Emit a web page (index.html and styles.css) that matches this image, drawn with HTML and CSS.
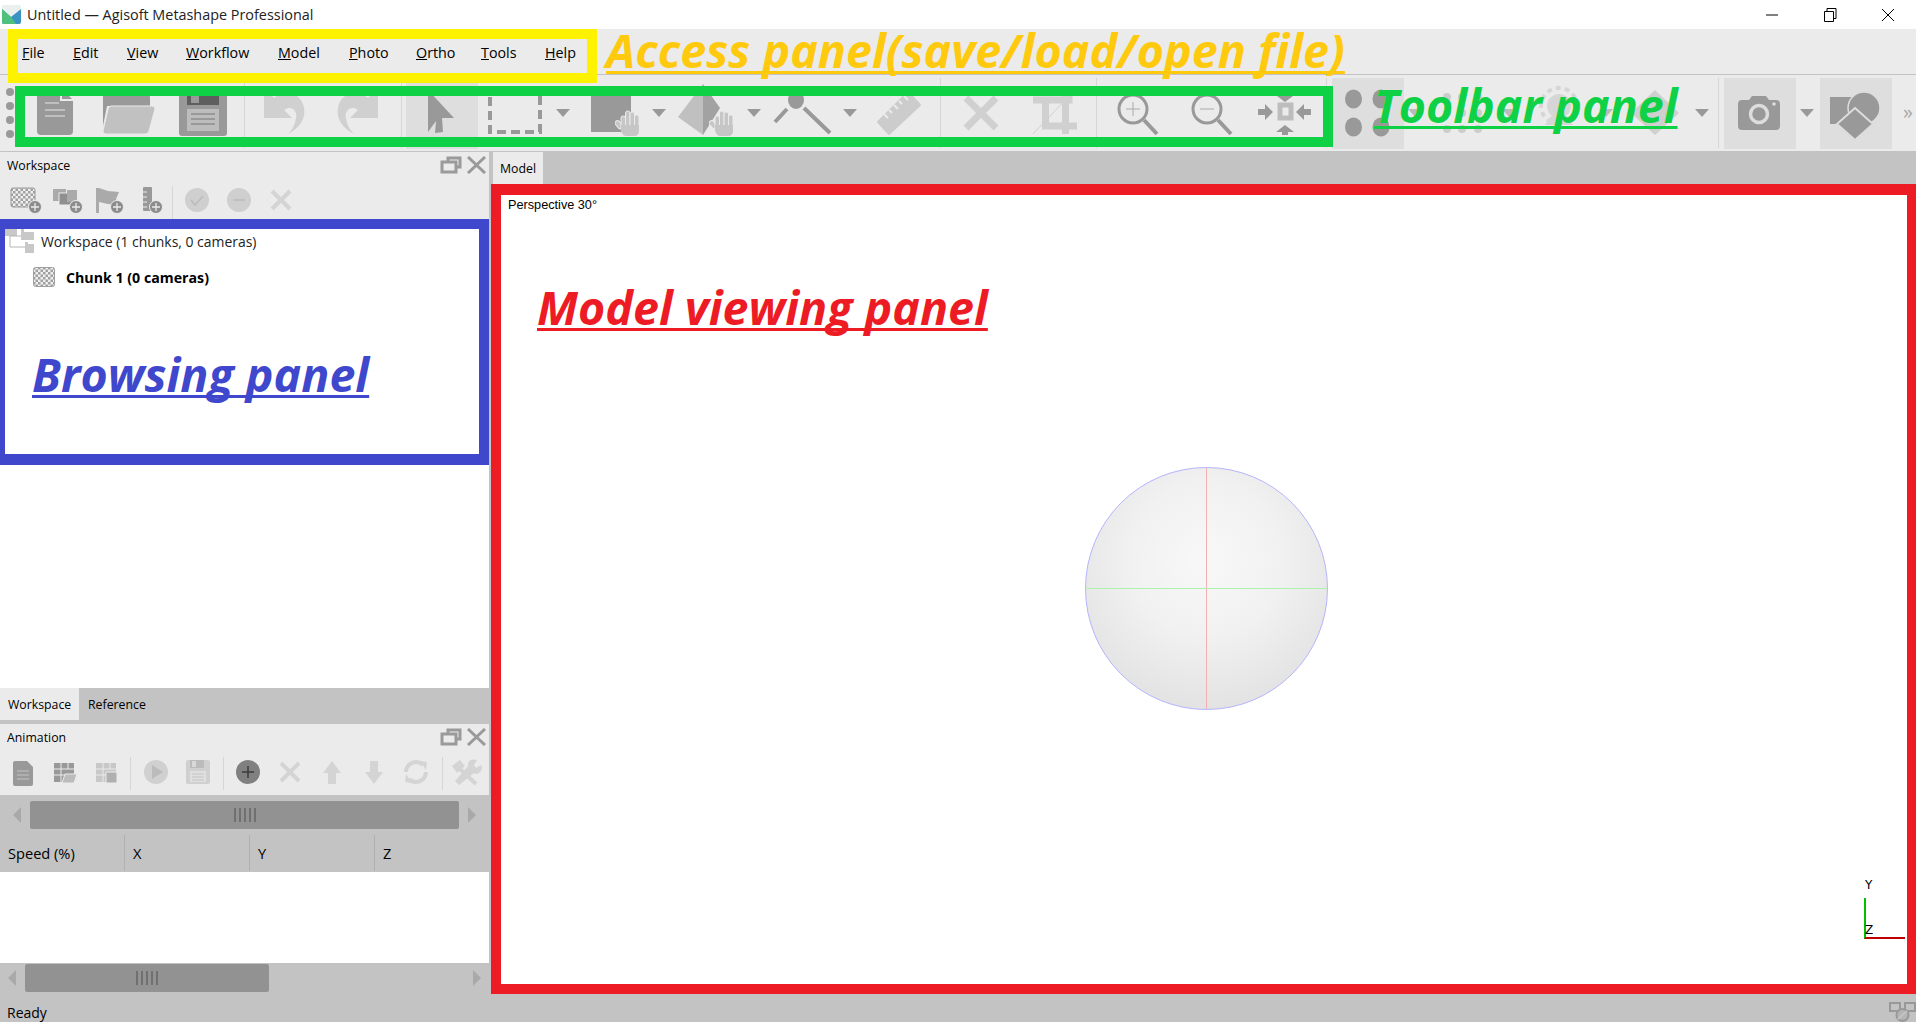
FILE: index.html
```html
<!DOCTYPE html>
<html lang="en">
  <head>
    <meta charset="UTF-8" />
    <title>Untitled — Agisoft Metashape Professional</title>
    <link rel="stylesheet" href="styles.css">
  </head>

  <body>
    <svg class="defs">
      <defs>
        <pattern id="chk" width="5" height="5" patternUnits="userSpaceOnUse">
          <rect width="5" height="5" fill="#f0f0f0" />
          <rect width="2.500" height="2.500" fill="#a0a0a0" />
          <rect x="2.500" y="2.500" width="2.500" height="2.500" fill="#a0a0a0" />
        </pattern>
        <symbol id="hand" viewBox="0 0 26 26">
          <g fill="#c6c6c6" stroke="#ebebeb" stroke-width="1">
            <rect x="0" y="12" width="9" height="5" rx="2.500" transform="rotate(50 4 14)" />
            <rect x="6" y="6" width="4.500" height="14" rx="2" />
            <rect x="10.500" y="1" width="4.500" height="18" rx="2" />
            <rect x="15" y="2" width="4.500" height="18" rx="2" />
            <rect x="19.500" y="5" width="4.500" height="15" rx="2" />
          </g>
          <path d="M6 15h18v6q0 5-5 5h-8q-3 0-5-5z" fill="#c6c6c6" />
        </symbol>
        <symbol id="plus" viewBox="0 0 14 14">
          <circle cx="7" cy="7" r="6.500" fill="#8c8c8c" stroke="#ebebeb" />
          <path d="M7 3v8M3 7h8" stroke="#ebebeb" stroke-width="1.300" />
        </symbol>
        <symbol id="float" viewBox="0 0 46 18">
          <path d="M8 6V2h12v9h-4M2 6h14v10H2z" fill="none" stroke="#9a9a9a" stroke-width="3" />
          <path d="M28 1l17 16M45 1L28 17" stroke="#9a9a9a" stroke-width="3" fill="none" />
        </symbol>
      </defs>
    </svg>

    <div class="window">
      <header class="titlebar">
        <svg class="app-logo" viewBox="0 0 19 19">
          <rect width="19" height="19" rx="2" fill="#e9f0ee" />
          <path d="M0 4l9 8 10-8v13q0 2-2 2H2q-2 0-2-2z" fill="#3b93c4" />
          <path d="M0 4l9 8 5 7H2q-2 0-2-2z" fill="#4fc17f" />
        </svg>
        <span class="app-title">Untitled — Agisoft Metashape Professional</span>
        <div class="win-buttons">
          <svg viewBox="0 0 58 14" width="58" height="14"><path d="M0 7h12" stroke="#000" fill="none" /></svg>
          <svg viewBox="0 0 58 14" width="58" height="14"><path d="M.5 3.500h9v10h-9zM3 3V.5h9v10H10" stroke="#000" fill="none" /></svg>
          <svg viewBox="0 0 12 14" width="12" height="14"><path d="M0 1l12 12M12 1L0 13" stroke="#000" fill="none" /></svg>
        </div>
      </header>

      <nav class="menubar">
        <a><u>F</u>ile</a>
        <a><u>E</u>dit</a>
        <a><u>V</u>iew</a>
        <a><u>W</u>orkflow</a>
        <a><u>M</u>odel</a>
        <a><u>P</u>hoto</a>
        <a><u>O</u>rtho</a>
        <a><u>T</u>ools</a>
        <a><u>H</u>elp</a>
      </nav>

      <div class="toolbar">
        <div class="grip"><i></i><i></i><i></i><i></i></div>

        <div class="tb-btn">
          <svg viewBox="0 0 72 71"><path d="M22 10h20l12 12v31q0 4-4 4H22q-4 0-4-4V14q0-4 4-4z" fill="#999" /><path d="M42 10v12h12" fill="none" stroke="#ebebeb" stroke-width="2" /><path d="M26 25h14M26 32h20M26 38h20" stroke="#bfbfbf" stroke-width="2" /></svg>
        </div>
        <div class="tb-btn">
          <svg viewBox="0 0 72 71"><path d="M10 14q0-4 4-4h14l4 6h22q3 0 3 4v8H14l-4 20z" fill="#999" /><path d="M18 28h41q3 0 3 3l-6 22q-1 3-4 3H13q-3 0-3-3l5-22q1-3 3-3z" fill="#c1c1c1" stroke="#ebebeb" /></svg>
        </div>
        <div class="tb-btn">
          <svg viewBox="0 0 72 71"><rect x="12" y="10" width="48" height="48" rx="3" fill="#999" /><rect x="20" y="10" width="32" height="17" fill="#5e5e5e" /><rect x="24" y="12" width="8" height="13" fill="#999" /><rect x="20" y="31" width="32" height="22" fill="#bdbdbd" /><path d="M24 36h24M24 41h24M24 46h24" stroke="#999" stroke-width="2" /></svg>
        </div>
        <div class="sep sep-a"></div>
        <div class="tb-btn">
          <svg viewBox="0 0 72 71"><path d="M16 10v30h28l-8-8c8-6 14 2 12 8-1 7-4 12-8 16 12-6 18-16 16-26-2-14-18-20-30-10z" fill="#d0d0d0" /></svg>
        </div>
        <div class="tb-btn">
          <svg viewBox="0 0 72 71"><path d="M56 10v30H28l8-8c-8-6-14 2-12 8 1 7 4 12 8 16-12-6-18-16-16-26 2-14 18-20 30-10z" fill="#d0d0d0" /></svg>
        </div>
        <div class="sep sep-b"></div>
        <div class="tb-btn selected">
          <svg viewBox="0 0 72 71"><path d="M22 12l26 28H36l1 14-8 1 1-12-8 11z" fill="#999" /></svg>
        </div>
        <div class="tb-btn">
          <svg viewBox="0 0 72 71"><rect x="10" y="12" width="50" height="42" fill="none" stroke="#999" stroke-width="4" stroke-dasharray="9 5" /></svg>
        </div>
        <div class="drop"><svg viewBox="0 0 14 8"><path d="M0 0h14L7 8z" fill="#999" /></svg></div>
        <div class="tb-btn ml2">
          <svg viewBox="0 0 72 71"><rect x="15" y="8" width="40" height="46" fill="#999" /><use href="#hand" x="39" y="32" width="26" height="26" /></svg>
        </div>
        <div class="drop"><svg viewBox="0 0 14 8"><path d="M0 0h14L7 8z" fill="#999" /></svg></div>
        <div class="tb-btn ml1">
          <svg viewBox="0 0 72 71"><path d="M32 6L7 39l25 18z" fill="#c0c0c0" /><path d="M32 6l17 24-17 27z" fill="#a2a2a2" /><use href="#hand" x="38" y="32" width="26" height="26" /></svg>
        </div>
        <div class="drop"><svg viewBox="0 0 14 8"><path d="M0 0h14L7 8z" fill="#999" /></svg></div>
        <div class="tb-btn ml2">
          <svg viewBox="0 0 72 71"><ellipse cx="29" cy="22" rx="8" ry="9" fill="#999" /><path d="M20 31L8 44M37 30l26 25" stroke="#999" stroke-width="4" /></svg>
        </div>
        <div class="drop"><svg viewBox="0 0 14 8"><path d="M0 0h14L7 8z" fill="#999" /></svg></div>
        <div class="tb-btn ml2">
          <svg viewBox="0 0 72 71"><path d="M45 14l12 13-31 29-11-12z" fill="#ccc" stroke="#ccc" stroke-width="2" stroke-linejoin="round" /><path d="M41 18l4 4M36 23l3 3M31 27l4 4M26 32l3 3M21 36l4 4" stroke="#ebebeb" stroke-width="2" /></svg>
        </div>
        <div class="sep sep-c"></div>
        <div class="tb-btn">
          <svg viewBox="0 0 72 71"><path d="M21 20l30 30M51 20L21 50" stroke="#d0d0d0" stroke-width="7" /></svg>
        </div>
        <div class="tb-btn">
          <svg viewBox="0 0 72 71"><path d="M14 22h36v-12M26.500 22v26H58M46.500 10v46" fill="none" stroke="#d0d0d0" stroke-width="7" /><path d="M14 56l36-38" stroke="#d0d0d0" /></svg>
        </div>
        <div class="sep sep-c"></div>
        <div class="tb-btn">
          <svg viewBox="0 0 72 71"><circle cx="32" cy="31" r="14" fill="none" stroke="#999" stroke-width="3" /><path d="M25 31h14M32 24v14" stroke="#aaa" /><path d="M43 42l13 14" stroke="#999" stroke-width="4" /></svg>
        </div>
        <div class="tb-btn">
          <svg viewBox="0 0 72 71"><circle cx="32" cy="31" r="14" fill="none" stroke="#999" stroke-width="3" /><path d="M25 31h14" stroke="#aaa" /><path d="M43 42l13 14" stroke="#999" stroke-width="4" /></svg>
        </div>
        <div class="tb-btn">
          <svg viewBox="0 0 72 71"><rect x="31" y="27" width="11" height="13" fill="none" stroke="#bdbdbd" stroke-width="5" /><path d="M24 34l-8-8v5H9v6h7v5zM47 34l8-8v5h7v6h-7v5zM28 18h16l-8 6zM36 47l-9 7h6v3h6v-3h6z" fill="#999" /></svg>
        </div>
        <div class="sep sep-d"></div>
        <div class="tb-btn selected">
          <svg viewBox="0 0 72 71"><g fill="#999"><ellipse cx="21.500" cy="21" rx="8.500" ry="9.500" /><ellipse cx="49" cy="21" rx="8.500" ry="9.500" /><ellipse cx="21.500" cy="49" rx="8.500" ry="9.500" /><ellipse cx="49" cy="49" rx="8.500" ry="9.500" /></g></svg>
        </div>
        <div class="drop"><svg viewBox="0 0 14 8"><path d="M0 0h14L7 8z" fill="#bbb" /></svg></div>
        <div class="tb-btn">
          <svg viewBox="0 0 72 71"><g fill="#ccc"><circle cx="21" cy="19" r="4" /><circle cx="36" cy="19" r="4" /><circle cx="52" cy="19" r="4" /><circle cx="21" cy="35" r="4" /><circle cx="36" cy="35" r="4" /><circle cx="52" cy="35" r="4" /><circle cx="21" cy="51" r="4" /><circle cx="36" cy="51" r="4" /><circle cx="52" cy="51" r="4" /></g></svg>
        </div>
        <div class="drop"><svg viewBox="0 0 14 8"><path d="M0 0h14L7 8z" fill="#bbb" /></svg></div>
        <div class="tb-btn ml3">
          <svg viewBox="0 0 72 71"><circle cx="36" cy="28" r="12" fill="#d6d6d6" /><path d="M28 38h16l6 9H22z" fill="#d6d6d6" /><circle cx="36" cy="28" r="18" fill="none" stroke="#d6d6d6" stroke-width="4" stroke-dasharray="5 4" /></svg>
        </div>
        <div class="drop"><svg viewBox="0 0 14 8"><path d="M0 0h14L7 8z" fill="#bbb" /></svg></div>
        <div class="tb-btn ml2">
          <svg viewBox="0 0 72 71"><path d="M36 12l24 23-24 22-24-22z" fill="#cfcfcf" /></svg>
        </div>
        <div class="drop"><svg viewBox="0 0 14 8"><path d="M0 0h14L7 8z" fill="#999" /></svg></div>
        <div class="sep sep-cam"></div>
        <div class="tb-btn selected">
          <svg viewBox="0 0 72 71"><path d="M18 22h7l3-4h14l3 4h7q4 0 4 4v22q0 4-4 4H18q-4 0-4-4V26q0-4 4-4z" fill="#999" /><circle cx="35" cy="36" r="8.500" fill="none" stroke="#ddd" stroke-width="3.500" /><circle cx="50" cy="26" r="1.800" fill="#ddd" /></svg>
        </div>
        <div class="drop"><svg viewBox="0 0 14 8"><path d="M0 0h14L7 8z" fill="#999" /></svg></div>
        <div class="tb-btn selected ml2">
          <svg viewBox="0 0 72 71"><rect x="10" y="19" width="25" height="27" fill="#999" /><circle cx="44" cy="30" r="16" fill="#999" stroke="#ddd" stroke-width="1.500" /><path d="M35 30l18 16-18 16-18-16z" fill="#999" stroke="#ddd" stroke-width="2" /></svg>
        </div>
        <span class="more">»</span>
      </div>

      <div class="main">
        <aside class="sidebar">
          <section class="dock-head dock-head-top">
            <span>Workspace</span>
            <svg class="float-icon"><use href="#float" /></svg>
          </section>
          <div class="dock-tools dock-tools-top">
            <div class="dk-btn"><svg viewBox="0 0 42 30"><rect x="8" y="2" width="24" height="19" rx="2" fill="url(#chk)" stroke="#999" /><use href="#plus" x="25" y="14" width="14" height="14" /></svg></div>
            <div class="dk-btn"><svg viewBox="0 0 42 30"><rect x="8" y="3" width="13" height="12" fill="#aaa" /><rect x="14" y="7" width="13" height="12" fill="#8f8f8f" stroke="#ebebeb" /><rect x="22" y="4" width="10" height="12" fill="#aaa" /><use href="#plus" x="24" y="14" width="14" height="14" /></svg></div>
            <div class="dk-btn"><svg viewBox="0 0 42 30"><path d="M9 2h3v25H9zM12 2l9 3 11 1-3 7 3 6-11-1-9-2z" fill="#aaa" /><use href="#plus" x="23" y="14" width="14" height="14" /></svg></div>
            <div class="dk-btn"><svg viewBox="0 0 42 30"><rect x="14" y="1" width="9" height="24" rx="1" fill="#999" /><path d="M14 6h4M14 11h4M14 16h4M14 21h4" stroke="#ebebeb" /><use href="#plus" x="20" y="14" width="14" height="14" /></svg></div>
            <div class="sep dk-sep"></div>
            <div class="dk-btn"><svg viewBox="0 0 42 30"><circle cx="21" cy="14" r="12" fill="#cfcfcf" /><path d="M15 14l4 5 8-9" fill="none" stroke="#bbb" stroke-width="1.500" /></svg></div>
            <div class="dk-btn"><svg viewBox="0 0 42 30"><circle cx="21" cy="14" r="12" fill="#cfcfcf" /><path d="M15 14h12" stroke="#bbb" stroke-width="1.500" /></svg></div>
            <div class="dk-btn"><svg viewBox="0 0 42 30"><path d="M12 5l18 18M30 5L12 23" stroke="#d4d4d4" stroke-width="4" /></svg></div>
          </div>

          <div class="tree">
            <div class="tree-row">
              <svg class="tree-icon" viewBox="0 0 30 26"><rect y="1" width="12" height="7" fill="#c8c8c8" /><path d="M16 1h3v3h10v8H16zM20 14h3v2h6v9H20z" fill="#c8c8c8" /><path d="M5 8v11h15M5 8h11" fill="none" stroke="#b5b5b5" /></svg>
              <span>Workspace (1 chunks, 0 cameras)</span>
            </div>
            <div class="tree-row tree-row-chunk">
              <svg class="chunk-icon" viewBox="0 0 22 20"><rect x=".5" y=".5" width="21" height="19" rx="2" fill="url(#chk)" stroke="#a0a0a0" /></svg>
              <b>Chunk 1 (0 cameras)</b>
            </div>
          </div>

          <div class="dock-tabs">
            <a class="active">Workspace</a>
            <a>Reference</a>
          </div>

          <section class="dock-head">
            <span>Animation</span>
            <svg class="float-icon"><use href="#float" /></svg>
          </section>
          <div class="dock-tools dock-tools-anim">
            <div class="dk-btn"><svg viewBox="0 0 42 30"><path d="M14 4h12l6 6v17q0 2-2 2H14q-2 0-2-2V6q0-2 2-2z" fill="#999" /><path d="M16 14h12M16 18h12M16 22h12" stroke="#c4c4c4" /></svg></div>
            <div class="dk-btn"><svg viewBox="0 0 42 30"><rect x="11" y="6" width="20" height="19" fill="#999" /><path d="M11 12h20M11 18h14M18 6v19M25 6v6" stroke="#ebebeb" /><path d="M22 17h12l-3 9H19z" fill="#bbb" stroke="#ebebeb" /></svg></div>
            <div class="dk-btn"><svg viewBox="0 0 42 30"><rect x="11" y="6" width="20" height="19" fill="#c8c8c8" /><path d="M11 12h20M11 18h14M18 6v19M25 6v6" stroke="#ebebeb" /><rect x="21" y="15" width="11" height="11" rx="1" fill="#b0b0b0" stroke="#ebebeb" /></svg></div>
            <div class="sep dk-sep-1"></div>
            <div class="dk-btn"><svg viewBox="0 0 42 30"><circle cx="21" cy="15" r="12" fill="#d0d0d0" /><path d="M17 8l11 7-11 7z" fill="#bbb" /></svg></div>
            <div class="dk-btn"><svg viewBox="0 0 42 30"><rect x="9" y="3" width="24" height="24" rx="2" fill="#d0d0d0" /><rect x="13" y="3" width="14" height="8" fill="#bbb" /><rect x="15" y="4" width="4" height="6" fill="#d8d8d8" /><rect x="13" y="14" width="16" height="11" fill="#e0e0e0" /><path d="M15 17h12M15 20h12M15 23h12" stroke="#c4c4c4" /></svg></div>
            <div class="sep dk-sep-2"></div>
            <div class="dk-btn"><svg viewBox="0 0 42 30"><circle cx="21" cy="15" r="12" fill="#808080" /><path d="M21 9v12M15 15h12" stroke="#3c3c3c" stroke-width="1.500" /></svg></div>
            <div class="dk-btn"><svg viewBox="0 0 42 30"><path d="M12 6l18 18M30 6L12 24" stroke="#d4d4d4" stroke-width="4" /></svg></div>
            <div class="dk-btn"><svg viewBox="0 0 42 30"><path d="M21 4l9 12h-5v11h-8V16h-5z" fill="#d4d4d4" /></svg></div>
            <div class="dk-btn"><svg viewBox="0 0 42 30"><path d="M21 27l9-12h-5V4h-8v11h-5z" fill="#d4d4d4" /></svg></div>
            <div class="dk-btn"><svg viewBox="0 0 42 30"><path d="M11 15a10 10 0 0 1 17-7M31 15a10 10 0 0 1-17 7" fill="none" stroke="#d4d4d4" stroke-width="4" /><path d="M25 4l7 1-1 8zM17 26l-7-1 1-8z" fill="#d4d4d4" /></svg></div>
            <div class="sep dk-sep-3"></div>
            <div class="dk-btn"><svg viewBox="0 0 42 30"><path d="M13 11l17 16" stroke="#d4d4d4" stroke-width="4" /><path d="M6 9l8-6 5 6-8 7zM31 3l-3 5 2 3 5-3 1 2q0 6-6 7l-2-1-15 12-4-4 13-15v-3q2-5 9-3z" fill="#d4d4d4" /></svg></div>
          </div>

          <div class="scroll scroll-anim">
            <i class="arrow-l"></i>
            <div class="thumb thumb-anim"><span class="thumb-grip"></span></div>
            <i class="arrow-r"></i>
          </div>
          <div class="table-head">
            <span>Speed (%)</span>
            <span>X</span>
            <span>Y</span>
            <span>Z</span>
          </div>
          <div class="table-body"></div>
          <div class="scroll scroll-table">
            <i class="arrow-l"></i>
            <div class="thumb thumb-table"><span class="thumb-grip"></span></div>
            <i class="arrow-r"></i>
          </div>
        </aside>

        <div class="split"></div>

        <section class="view">
          <div class="view-tabs"><a>Model</a></div>
          <div class="viewport">
            <span class="perspective">Perspective 30°</span>
            <div class="sphere"><i class="sphere-v"></i><i class="sphere-h"></i></div>
            <div class="axes">
              <span class="axis-y">Y</span>
              <span class="axis-z">Z</span>
            </div>
          </div>
        </section>
      </div>

      <footer class="statusbar">
        <span>Ready</span>
        <svg class="status-icon" viewBox="0 0 27 22"><path d="M1 3h10v8H1zM16 3h10v8H16z" fill="none" stroke="#999" stroke-width="2" /><circle cx="13.500" cy="15" r="6" fill="#b5b5b5" stroke="#999" stroke-width="2" /><path d="M9 19l9-8" stroke="#c3c3c3" stroke-width="2" /></svg>
      </footer>

      <!-- coloured notes drawn on top of the screenshot -->
      <div class="box box-access"></div>
      <div class="box box-toolbar"></div>
      <div class="box box-browse"></div>
      <div class="box box-model"></div>
      <span class="note note-access">Access panel(save/load/open file)</span>
      <span class="note note-toolbar">Toolbar panel</span>
      <span class="note note-browse">Browsing panel</span>
      <span class="note note-model">Model viewing panel</span>
    </div>
  </body>
</html>
```

FILE: styles.css
```css
* {
  box-sizing: border-box;
}

html,
body {
  margin: 0;
  height: 100%;
  overflow: hidden;
}

body {
  font-family: "Open Sans", "Noto Sans", sans-serif;
  font-size: 14px;
  color: #000;
  background: #fff;
}

.defs {
  display: block;
  width: 0;
  height: 0;
}

.window {
  position: relative;
  display: flex;
  flex-direction: column;
  width: 1916px;
  height: 1022px;
}

.titlebar {
  display: flex;
  align-items: center;
  height: 29px;
  padding: 0 22px 0 2px;
  background: #fff;
}

.app-logo {
  width: 19px;
  height: 19px;
  margin: 0 6px 0 0;
}

.app-title {
  font-size: 14.400px;
  color: #222;
}

.win-buttons {
  display: flex;
  align-items: center;
  margin-left: auto;
}

.menubar {
  display: flex;
  align-items: flex-start;
  height: 46px;
  padding: 14px 0 0 22px;
  background: #ebebeb;
  border-bottom: 1px solid #c3c3c3;
  font-size: 14.300px;
}

.menubar a {
  width: 51px;
}

.menubar a:nth-child(2) { width: 54px; }
.menubar a:nth-child(3) { width: 59px; }
.menubar a:nth-child(4) { width: 92px; }
.menubar a:nth-child(5) { width: 71px; }
.menubar a:nth-child(6) { width: 67px; }
.menubar a:nth-child(7) { width: 65px; }
.menubar a:nth-child(8) { width: 64px; }

.toolbar {
  display: flex;
  align-items: flex-start;
  height: 76px;
  padding: 3px 0 0 19px;
  background: #ebebeb;
}

.grip {
  display: flex;
  flex-direction: column;
  gap: 6px;
  width: 0;
  margin: 10px 13px 0 -13px;
}

.grip i {
  flex: none;
  width: 8px;
  height: 8px;
  border-radius: 50%;
  background: #999;
}

.tb-btn {
  flex: none;
  width: 72px;
  height: 71px;
  margin-right: 2px;
}

.tb-btn svg {
  display: block;
  width: 72px;
  height: 71px;
}

.tb-btn.selected {
  background: #dedede;
}

.ml1 {
  margin-left: 1px;
}

.ml2 {
  margin-left: 2px;
}

.ml3 {
  margin-left: 3px;
}

.sep {
  flex: none;
  width: 1px;
  height: 70px;
  background: #d6d6d6;
}

.sep-a {
  margin: 0 3px;
}

.sep-b {
  margin: 0 4px 0 5px;
}

.sep-c {
  margin: 0 4px 0 3px;
}

.sep-d {
  margin: 0 5px 0 3px;
}

.sep-cam {
  margin: 0 5px;
}

.drop {
  flex: none;
  display: flex;
  justify-content: center;
  width: 22px;
  margin-left: -2px;
  padding-top: 31px;
}

.drop svg {
  width: 14px;
  height: 8px;
}

.more {
  margin: 20px 0 0 9px;
  font-size: 20px;
  color: #a8a8a8;
}

.main {
  flex: 1;
  display: flex;
  min-height: 0;
  padding-top: 1px;
  background: #c3c3c3;
}

.sidebar {
  display: flex;
  flex-direction: column;
  flex: none;
  width: 489px;
  background: #ebebeb;
}

.split {
  flex: none;
  width: 2px;
  background: #c3c3c3;
}

.dock-head {
  display: flex;
  align-items: center;
  justify-content: space-between;
  height: 32px;
  padding: 0 3px 6px 7px;
  background: #ebebeb;
  font-size: 12.300px;
}

.dock-head-top {
  height: 34px;
  padding-bottom: 8px;
}

.float-icon {
  width: 46px;
  height: 18px;
}

.dock-tools {
  display: flex;
  align-items: flex-start;
  background: #ebebeb;
}

.dock-tools-top {
  height: 33px;
  padding-left: 3px;
}

.dock-tools-anim {
  height: 39px;
  padding: 1px 0 0 1px;
}

.dk-btn {
  flex: none;
  width: 42px;
  height: 30px;
}

.dk-btn svg {
  display: block;
  width: 42px;
  height: 30px;
}

.dk-sep {
  height: 33px;
  margin: 0 3px 0 1px;
}

.dk-sep-1,
.dk-sep-2,
.dk-sep-3 {
  height: 33px;
}

.dk-sep-1 {
  margin: 0 4px 0 3px;
}

.dk-sep-2 {
  margin: 0 3px 0 4px;
}

.dk-sep-3 {
  margin: 0 3px 0 5px;
}

.tree {
  flex: 1;
  padding-top: 9px;
  background: #fff;
  font-size: 13.950px;
  color: #222;
}

.tree-row {
  display: flex;
  align-items: center;
  height: 26px;
  padding-left: 5px;
}

.tree-icon {
  width: 30px;
  height: 26px;
  margin-right: 6px;
}

.tree-row-chunk {
  margin-top: 10px;
  padding-left: 33px;
  color: #000;
}

.chunk-icon {
  width: 22px;
  height: 20px;
  margin-right: 11px;
}

.tree-row-chunk b {
  font-size: 14.200px;
}

.dock-tabs {
  display: flex;
  align-items: flex-start;
  height: 36px;
  background: #c3c3c3;
  font-size: 12.300px;
}

.dock-tabs a {
  display: flex;
  align-items: center;
  height: 32px;
  padding: 0 9px;
}

.dock-tabs a.active {
  width: 79px;
  padding: 0 8px;
  background: #ebebeb;
}

.scroll {
  display: flex;
  align-items: flex-start;
  background: #c3c3c3;
}

.scroll-anim {
  height: 40px;
  padding-top: 6px;
}

.scroll-table {
  height: 31px;
  padding-top: 1px;
}

.arrow-l,
.arrow-r {
  flex: none;
  width: 0;
  height: 0;
  margin-top: 6px;
  border-top: 8px solid transparent;
  border-bottom: 8px solid transparent;
}

.arrow-l {
  border-right: 8px solid #a9a9a9;
}

.arrow-r {
  border-left: 8px solid #a9a9a9;
}

.thumb {
  display: flex;
  justify-content: center;
  align-items: center;
  flex: none;
  height: 28px;
  border-radius: 2px;
  background: #929292;
}

.thumb-anim {
  width: 429px;
  margin: 0 9px;
}

.scroll-anim .arrow-l {
  margin-left: 13px;
}

.scroll-table .arrow-l {
  margin-left: 8px;
}

.thumb-table {
  width: 244px;
  margin: 0 204px 0 9px;
}

.thumb-grip {
  width: 22px;
  height: 14px;
  background: repeating-linear-gradient(90deg, #707070 0 2px, #929292 2px 5px);
}

.table-head {
  display: flex;
  height: 37px;
  padding-bottom: 1px;
  background: #c3c3c3;
  font-size: 14.600px;
}

.table-head span {
  display: flex;
  align-items: center;
  width: 125px;
  padding-left: 8px;
  border-right: 1px solid #b0b0b0;
}

.table-head span:last-child {
  flex: 1;
  border-right: 0;
}

.table-body {
  height: 91px;
  background: #fff;
}

.view {
  flex: 1;
  display: flex;
  flex-direction: column;
  min-width: 0;
}

.view-tabs {
  display: flex;
  height: 32px;
  padding-left: 2px;
  background: #c3c3c3;
}

.view-tabs a {
  display: flex;
  align-items: center;
  justify-content: center;
  width: 50px;
  background: #ebebeb;
  font-size: 12.300px;
}

.viewport {
  flex: 1;
  position: relative;
  background: #fff;
}

.perspective {
  position: absolute;
  left: 17px;
  top: 14px;
  font-family: "Liberation Sans", sans-serif;
  font-size: 12.700px;
}

.sphere {
  position: absolute;
  left: 594px;
  top: 283px;
  width: 243px;
  height: 243px;
  border: 1px solid #b4b4ff;
  border-radius: 50%;
  background: radial-gradient(circle at 50% 38%, #f8f8f8 0, #f1f1f1 40%, #dadada 100%);
}

.sphere-v {
  position: absolute;
  left: 120px;
  top: 0;
  width: 1px;
  height: 100%;
  background: #f4b0b0;
}

.sphere-h {
  position: absolute;
  left: 0;
  top: 120px;
  width: 100%;
  height: 1px;
  background: #b0f0b0;
}

.axes {
  position: absolute;
  left: 1373px;
  top: 714px;
  width: 41px;
  height: 41px;
  border-left: 2px solid #00c000;
  border-bottom: 2px solid #c00000;
  font-family: "DejaVu Sans", sans-serif;
  font-size: 12px;
}

.axis-y {
  position: absolute;
  left: -1px;
  top: -20px;
}

.axis-z {
  position: absolute;
  left: -1px;
  top: 25px;
}

.statusbar {
  display: flex;
  align-items: flex-end;
  justify-content: space-between;
  height: 28px;
  padding: 0 0 0 7px;
  background: #c3c3c3;
  font-size: 14px;
}

.status-icon {
  width: 27px;
  height: 22px;
}

.box {
  position: absolute;
  border-style: solid;
}

.box-access {
  left: 8px;
  top: 29px;
  width: 589px;
  height: 54px;
  border-color: #fff200;
  border-width: 10px;
}

.box-toolbar {
  left: 15px;
  top: 86px;
  width: 1318px;
  height: 61px;
  border-color: #0ed145;
  border-width: 10px;
}

.box-browse {
  left: 0;
  top: 219px;
  width: 489px;
  height: 246px;
  border-color: #3f48cc;
  border-width: 10px 10px 11px 5px;
}

.box-model {
  left: 491px;
  top: 184px;
  width: 1425px;
  height: 810px;
  border-color: #ed1c24;
  border-width: 11px 9px 10px 10px;
}

.note {
  position: absolute;
  font-weight: 700;
  font-style: italic;
  font-size: 46.600px;
  line-height: 56px;
  white-space: nowrap;
  text-decoration: underline;
  text-decoration-thickness: 3px;
  text-decoration-skip-ink: none;
  text-underline-offset: 3px;
}

.note-access {
  left: 606px;
  top: 22px;
  color: #ffc90e;
}

.note-toolbar {
  left: 1374px;
  top: 77px;
  color: #0ed145;
}

.note-browse {
  left: 32px;
  top: 346px;
  color: #3f48cc;
}

.note-model {
  left: 537px;
  top: 279px;
  color: #ed1c24;
}
```
